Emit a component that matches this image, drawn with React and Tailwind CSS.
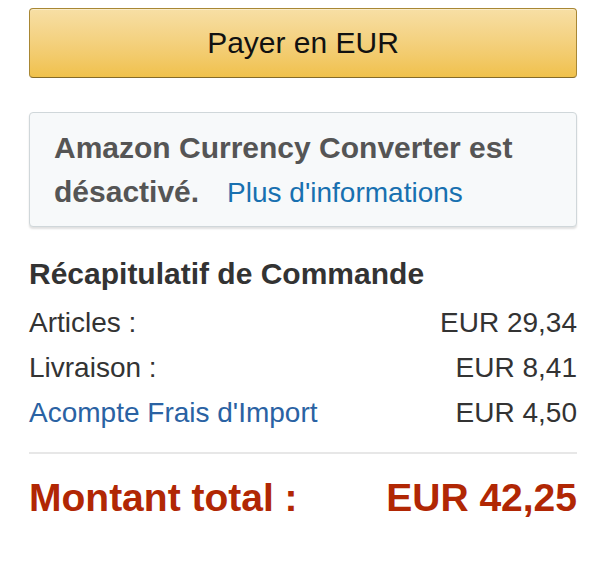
import React from 'react';

const lines = [
    { label: 'Articles :', amount: 'EUR 29,34' },
    { label: 'Livraison :', amount: 'EUR 8,41' },
    { label: "Acompte Frais d'Import", amount: 'EUR 4,50', link: true },
];

const OrderSummary = () => {
    return (
        <div className="min-h-[575px] bg-white font-['Liberation_Sans',Arial,sans-serif]">
            <div className="ml-[29px] w-[548px] pt-2">
                {/* Pay button */}
                <button className="flex h-[70px] w-full items-center justify-center rounded-[4px] border border-[#a88734] border-b-[#846a29] bg-gradient-to-b from-[#f7dfa5] to-[#f0c14b] text-[30px] leading-none text-[#111] shadow-[inset_0_1px_0_rgba(255,255,255,0.4)]">
                    Payer en EUR
                </button>

                {/* Converter notice */}
                <div className="mt-[34px] rounded-[4px] border border-[#d0d7da] bg-[#f7f9fa] px-[24px] pb-[11px] pt-[13px] shadow-[0_2px_2px_rgba(0,0,0,0.12)]">
                    <div className="text-[30px] font-bold leading-[44px] text-[#555]">
                        Amazon Currency Converter est
                    </div>
                    <div className="flex items-baseline leading-[44px]">
                        <span className="text-[30px] font-bold text-[#555]">désactivé.</span>
                        <a href="#" className="ml-[28px] text-[28px] text-[#1870b0]">
                            Plus d'informations
                        </a>
                    </div>
                </div>

                {/* Order summary */}
                <h3 className="mt-[29px] text-[30px] font-bold leading-[36px] text-[#333]">
                    Récapitulatif de Commande
                </h3>
                <div className="mt-2">
                    {lines.map((line) => (
                        <div key={line.label} className="flex h-[45px] items-center justify-between text-[28px] leading-[45px] text-[#333]">
                            {line.link ? (
                                <a href="#" className="text-[#2a62a3]">{line.label}</a>
                            ) : (
                                <span>{line.label}</span>
                            )}
                            <span>{line.amount}</span>
                        </div>
                    ))}
                </div>

                <div className="mt-[17px] border-t-2 border-[#e7e7e7]" />

                <div className="mt-[21px] flex items-center justify-between text-[39px] font-bold leading-[46px] text-[#b12704]">
                    <span>Montant total&nbsp;:</span>
                    <span>EUR 42,25</span>
                </div>
            </div>
        </div>
    );
};

export default OrderSummary;
